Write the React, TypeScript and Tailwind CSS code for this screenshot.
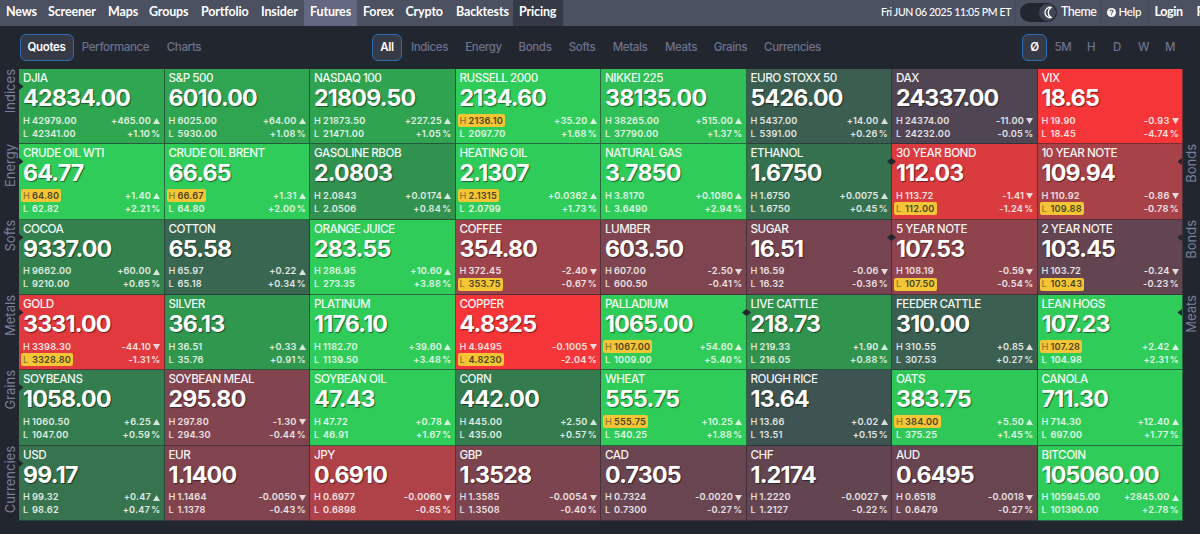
import React from "react";

type Quote = [name: string, price: string, high: string, low: string, change: string, pct: string, mark?: "H" | "L"];

const ROWS: Quote[][] = [
  [
    ["DJIA", "42834.00", "42979.00", "42341.00", "+465.00", "+1.10"],
    ["S&P 500", "6010.00", "6025.00", "5930.00", "+64.00", "+1.08"],
    ["NASDAQ 100", "21809.50", "21873.50", "21471.00", "+227.25", "+1.05"],
    ["RUSSELL 2000", "2134.60", "2136.10", "2097.70", "+35.20", "+1.68", "H"],
    ["NIKKEI 225", "38135.00", "38265.00", "37790.00", "+515.00", "+1.37"],
    ["EURO STOXX 50", "5426.00", "5437.00", "5391.00", "+14.00", "+0.26"],
    ["DAX", "24337.00", "24374.00", "24232.00", "-11.00", "-0.05"],
    ["VIX", "18.65", "19.90", "18.45", "-0.93", "-4.74"],
  ],
  [
    ["CRUDE OIL WTI", "64.77", "64.80", "62.82", "+1.40", "+2.21", "H"],
    ["CRUDE OIL BRENT", "66.65", "66.67", "64.80", "+1.31", "+2.00", "H"],
    ["GASOLINE RBOB", "2.0803", "2.0843", "2.0506", "+0.0174", "+0.84"],
    ["HEATING OIL", "2.1307", "2.1315", "2.0799", "+0.0362", "+1.73", "H"],
    ["NATURAL GAS", "3.7850", "3.8170", "3.6490", "+0.1080", "+2.94"],
    ["ETHANOL", "1.6750", "1.6750", "1.6750", "+0.0075", "+0.45"],
    ["30 YEAR BOND", "112.03", "113.72", "112.00", "-1.41", "-1.24", "L"],
    ["10 YEAR NOTE", "109.94", "110.92", "109.88", "-0.86", "-0.78", "L"],
  ],
  [
    ["COCOA", "9337.00", "9662.00", "9210.00", "+60.00", "+0.65"],
    ["COTTON", "65.58", "65.97", "65.18", "+0.22", "+0.34"],
    ["ORANGE JUICE", "283.55", "286.95", "273.35", "+10.60", "+3.88"],
    ["COFFEE", "354.80", "372.45", "353.75", "-2.40", "-0.67", "L"],
    ["LUMBER", "603.50", "607.00", "600.50", "-2.50", "-0.41"],
    ["SUGAR", "16.51", "16.59", "16.32", "-0.06", "-0.36"],
    ["5 YEAR NOTE", "107.53", "108.19", "107.50", "-0.59", "-0.54", "L"],
    ["2 YEAR NOTE", "103.45", "103.72", "103.43", "-0.24", "-0.23", "L"],
  ],
  [
    ["GOLD", "3331.00", "3398.30", "3328.80", "-44.10", "-1.31", "L"],
    ["SILVER", "36.13", "36.51", "35.76", "+0.33", "+0.91"],
    ["PLATINUM", "1176.10", "1182.70", "1139.50", "+39.60", "+3.48"],
    ["COPPER", "4.8325", "4.9495", "4.8230", "-0.1005", "-2.04", "L"],
    ["PALLADIUM", "1065.00", "1067.00", "1009.00", "+54.60", "+5.40", "H"],
    ["LIVE CATTLE", "218.73", "219.33", "216.05", "+1.90", "+0.88"],
    ["FEEDER CATTLE", "310.00", "310.55", "307.53", "+0.85", "+0.27"],
    ["LEAN HOGS", "107.23", "107.28", "104.98", "+2.42", "+2.31", "H"],
  ],
  [
    ["SOYBEANS", "1058.00", "1060.50", "1047.00", "+6.25", "+0.59"],
    ["SOYBEAN MEAL", "295.80", "297.80", "294.30", "-1.30", "-0.44"],
    ["SOYBEAN OIL", "47.43", "47.72", "46.91", "+0.78", "+1.67"],
    ["CORN", "442.00", "445.00", "435.00", "+2.50", "+0.57"],
    ["WHEAT", "555.75", "555.75", "540.25", "+10.25", "+1.88", "H"],
    ["ROUGH RICE", "13.64", "13.66", "13.51", "+0.02", "+0.15"],
    ["OATS", "383.75", "384.00", "375.25", "+5.50", "+1.45", "H"],
    ["CANOLA", "711.30", "714.30", "697.00", "+12.40", "+1.77"],
  ],
  [
    ["USD", "99.17", "99.32", "98.62", "+0.47", "+0.47"],
    ["EUR", "1.1400", "1.1464", "1.1378", "-0.0050", "-0.43"],
    ["JPY", "0.6910", "0.6977", "0.6898", "-0.0060", "-0.85"],
    ["GBP", "1.3528", "1.3585", "1.3508", "-0.0054", "-0.40"],
    ["CAD", "0.7305", "0.7324", "0.7300", "-0.0020", "-0.27"],
    ["CHF", "1.2174", "1.2220", "1.2127", "-0.0027", "-0.22"],
    ["AUD", "0.6495", "0.6518", "0.6479", "-0.0018", "-0.27"],
    ["BITCOIN", "105060.00", "105945.00", "101390.00", "+2845.00", "+2.78"],
  ],
];

const LEFT_LABELS = ["Indices", "Energy", "Softs", "Metals", "Grains", "Currencies"];
const RIGHT_LABELS = ["", "Bonds", "Bonds", "Meats", "", ""];

// Columns at whose left edge a new group begins, per row.
const GROUP_STARTS: Record<number, number> = { 1: 6, 2: 6, 3: 5 };

// Colour stops in steps of 0.5 %, from -1.5 % to +1.5 %.
const STOPS = [
  [246, 53, 56],
  [191, 64, 69],
  [139, 68, 78],
  [65, 69, 84],
  [53, 118, 78],
  [47, 158, 79],
  [48, 204, 90],
];

function heat(pct: number): string {
  // Tiny moves still get a visible tint.
  const p = Math.sign(pct) * Math.max(0.1, Math.abs(pct));
  const t = Math.max(0, Math.min(6, p / 0.5 + 3));
  const i = Math.min(5, Math.floor(t));
  const c = STOPS[i].map((v, k) => Math.round(v + (STOPS[i + 1][k] - v) * (t - i)));
  return `rgb(${c.join(",")})`;
}

function Level({ tag, value, marked }: { tag: string; value: string; marked: boolean }) {
  return (
    <span
      className={
        marked
          ? "-ml-[2px] flex h-[13px] items-center rounded-[2px] bg-[#f4c534] pr-[2px] pl-[2px] text-[#4a4526]"
          : "flex h-[13px] items-center"
      }
    >
      <span className={marked ? "w-[9px] font-medium text-[#8d7a35]" : "w-[9px] font-medium"}>{tag}</span>
      {value}
    </span>
  );
}

function Tile({ quote, row, col }: { quote: Quote; row: number; col: number }) {
  const [name, price, high, low, change, pct, mark] = quote;
  const up = change[0] === "+";
  return (
    <div
      className="relative flex min-w-0 flex-col border-r border-b border-[#22262f]/60 pt-[2px] pr-[3.5px] pl-[4px]"
      style={{ backgroundColor: heat(parseFloat(pct)) }}
    >
      <div className="h-[14px] text-[11.700px] leading-[15px] font-medium tracking-[-0.520px] whitespace-nowrap text-white/95">{name}</div>
      <div className="h-[26px] text-[23.200px] leading-[26px] font-bold tracking-[-0.800px] whitespace-nowrap text-white [text-shadow:1px_1px_1px_rgba(0,0,0,0.5)]">
        {price}
      </div>
      <div className="mt-[3px] flex justify-between text-[9.200px] leading-[12px] font-semibold tracking-[0.200px] whitespace-nowrap text-white/85">
        <div className="flex flex-col items-start">
          <Level tag="H" value={high} marked={mark === "H"} />
          <Level tag="L" value={low} marked={mark === "L"} />
        </div>
        <div className="flex flex-col items-end">
          <span className="flex h-[13px] items-center">
            {change}
            <span className="flex w-[9px] shrink-0 justify-end">
              <svg width="7" height="6" viewBox="0 0 7 6" className="mt-[1px] shrink-0 fill-white/80">
                <path d={up ? "M3.5 0 7 6H0Z" : "M3.5 6 0 0h7Z"} />
              </svg>
            </span>
          </span>
          <span className="flex h-[13px] items-center">
            {pct}
            <span className="w-[10px] shrink-0 text-right text-[8.800px] tracking-normal">%</span>
          </span>
        </div>
      </div>
      {col === 0 && (
        <svg className="absolute top-[13px] left-0 fill-[#22262f]" width="5" height="9" viewBox="0 0 5 9">
          <path d="M0 1 4.5 4.5 0 8Z" />
        </svg>
      )}
      {GROUP_STARTS[row] === col && (
        <svg className="absolute top-[14px] -left-[5px] z-10 fill-[#22262f]" width="9" height="7" viewBox="0 0 9 7">
          <path d="M0 3.5 3.5.5h2L9 3.5 5.500 6.500h-2Z" />
        </svg>
      )}
      {col === 7 && RIGHT_LABELS[row] && (
        <svg className="absolute top-[13px] right-0 fill-[#22262f]" width="5" height="9" viewBox="0 0 5 9">
          <path d="M5 1 .5 4.500 5 8Z" />
        </svg>
      )}
    </div>
  );
}

function SideLabels({ labels }: { labels: string[] }) {
  return (
    <div className="grid h-full grid-rows-6 justify-items-center">
      {labels.map((label, i) => (
        <div key={i} className="flex min-h-0 items-start">
          <span className="rotate-180 text-[13px] leading-[16px] whitespace-nowrap text-[#7b809b] [writing-mode:vertical-rl]">{label}</span>
        </div>
      ))}
    </div>
  );
}

const NAV: [string, string][] = [
  ["News", "w-[42px]"],
  ["Screener", "w-[60px]"],
  ["Maps", "w-[41px]"],
  ["Groups", "w-[52px]"],
  ["Portfolio", "w-[60px]"],
  ["Insider", "w-[49px]"],
  ["Futures", "w-[53px] bg-[#636880]"],
  ["Forex", "w-[42.500px]"],
  ["Crypto", "w-[50.500px]"],
  ["Backtests", "w-[63px]"],
  ["Pricing", "w-[50px] bg-[#363a46]"],
];

const VIEWS: [string, string][] = [["Quotes", "w-[54px]"], ["Performance", "w-[84px]"], ["Charts", "w-[53px]"]];
const GROUPS: [string, string][] = [
  ["All", "w-[30px]"],
  ["Indices", "w-[55px]"],
  ["Energy", "w-[53px]"],
  ["Bonds", "w-[50px]"],
  ["Softs", "w-[44px]"],
  ["Metals", "w-[52px]"],
  ["Meats", "w-[50px]"],
  ["Grains", "w-[49px]"],
  ["Currencies", "w-[75px]"],
];
const FRAMES: [string, string][] = [["Ø", "w-[25px]"], ["5M", "w-[32px]"], ["H", "w-[24px]"], ["D", "w-[28px]"], ["W", "w-[25px]"], ["M", "w-[28px]"]];

function Tabs({ items }: { items: [string, string][] }) {
  return (
    <div className="flex">
      {items.map(([label, width], i) => (
        <button
          key={label}
          className={`flex h-[27px] shrink-0 items-center justify-center pt-[1px] text-[11.500px] tracking-[-0.350px] ${width} ${
            i === 0
              ? "rounded-[6px] border border-[#2c6db3] bg-[#363a46] font-semibold text-white"
              : "font-medium text-[#6d728c]"
          }`}
        >
          {label}
        </button>
      ))}
    </div>
  );
}

export default function App() {
  return (
    <div className="flex h-[534px] w-[1200px] flex-col overflow-hidden bg-[#22262f] font-['Inter',sans-serif]">
      <header className="flex h-[26px] shrink-0 bg-[#4c5162] font-['Lato',sans-serif] text-[12.500px] font-bold tracking-[-0.150px] text-white">
        <nav className="flex">
          {NAV.map(([label, cls]) => (
            <a key={label} className={`flex shrink-0 items-center pb-[1px] pl-[6px] ${cls}`}>
              {label}
            </a>
          ))}
        </nav>
        <div className="flex flex-1 items-center justify-end overflow-hidden whitespace-nowrap">
          <span className="flex h-full w-[135px] shrink-0 items-center border-r border-[#444958] pb-[1px] text-[10.500px] font-medium tracking-[-0.360px]">
            Fri JUN 06 2025 11:05 PM ET
          </span>
          <span className="flex w-[84.500px] shrink-0 items-center pb-[1px] pl-[4px]">
            <span className="flex h-[19px] w-[37px] shrink-0 items-center justify-end rounded-full bg-[#22262f] pr-[1px]">
              <span className="flex h-[17px] w-[17px] items-center justify-center rounded-full bg-[#414554]">
                <svg width="11" height="13" viewBox="0 0 11 13" fill="none" stroke="white" strokeWidth="1.3" strokeLinejoin="round">
                  <path d="M9.300 1.300A5.300 5.300 0 1 0 9.300 11.700C5.300 9.700 5.300 3.300 9.300 1.300Z" />
                </svg>
              </span>
            </span>
            <span className="ml-[4px] text-[12.500px] font-medium tracking-[-0.500px]">Theme</span>
          </span>
          <span className="flex h-full w-[48px] shrink-0 items-center border-x border-[#444958] pb-[2px] pl-[5px] text-[11.500px] font-medium tracking-[-0.350px]">
            <svg width="9" height="9" viewBox="0 0 9 9" className="mr-[3px] shrink-0">
              <circle cx="4.500" cy="4.500" r="4.500" fill="white" />
              <path d="M3 3.500C3 1.600 6 1.600 6 3.300 6 4.400 4.500 4.300 4.500 5.400M4.500 6.300v1" stroke="#4c5162" strokeWidth="1.100" fill="none" />
            </svg>
            Help
          </span>
          <span className="w-[48px] shrink-0 pb-[1px] pl-[6px] tracking-[-0.400px]">Login</span>
          <span className="w-[3.500px] shrink-0 overflow-hidden pb-[1px]">Register</span>
        </div>
      </header>

      <div className="flex h-[43px] shrink-0 items-center pr-[16px] pl-[19.500px]">
        <div className="w-[352.500px] shrink-0">
          <Tabs items={VIEWS} />
        </div>
        <Tabs items={GROUPS} />
        <div className="ml-auto">
          <Tabs items={FRAMES} />
        </div>
      </div>

      <main className="flex h-[452px] shrink-0">
        <div className="w-[19px] shrink-0">
          <SideLabels labels={LEFT_LABELS} />
        </div>
        <div className="grid flex-1 grid-cols-8 grid-rows-6">
          {ROWS.map((quotes, row) => quotes.map((q, col) => <Tile key={q[0]} quote={q} row={row} col={col} />))}
        </div>
        <div className="w-[17px] shrink-0 pr-[2px]">
          <SideLabels labels={RIGHT_LABELS} />
        </div>
      </main>
    </div>
  );
}
